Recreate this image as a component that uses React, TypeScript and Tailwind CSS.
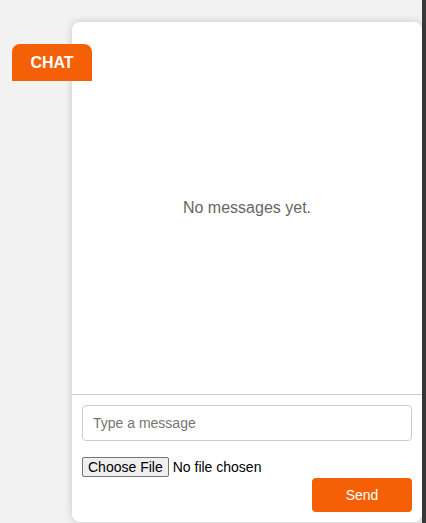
import React from "react";

export default function App() {
  return (
    <div className="flex h-[523px] w-full bg-[#f2f2f2] font-['Liberation_Sans',Arial,sans-serif] overflow-hidden">
      <div className="relative flex-1 pl-[72px] pt-[22px]">
        <div className="flex h-[500px] w-[350px] flex-col rounded-[8px] bg-white shadow-[0_0_8px_rgba(0,0,0,0.18)]">
          <div className="flex flex-1 items-center justify-center">
            <p className="text-[16px] text-[#666]">No messages yet.</p>
          </div>
          <div className="flex flex-col border-t border-[#cccccc] px-[10px] pt-[10px] pb-[10px]">
            <input
              type="text"
              placeholder="Type a message"
              className="h-[36px] w-full rounded-[4px] border border-[#cccccc] px-[10px] text-[14px] text-[#333] placeholder:text-[#757575] outline-none"
            />
            <div className="mt-[16px] flex h-[21px] items-start">
              <input
                type="file"
                className="text-[14px] leading-[16px] text-black file:mr-[4px] file:rounded-[2px] file:border file:border-solid file:border-[#767676] file:bg-[#efefef] file:px-[5px] file:py-[1px] file:text-black"
              />
            </div>
            <div className="flex justify-end">
              <button className="h-[34px] w-[100px] rounded-[4px] bg-[#f55f05] text-[14px] text-white">
                Send
              </button>
            </div>
          </div>
        </div>
        <div className="absolute left-[12px] top-[44px] flex h-[37px] w-[80px] items-center justify-center rounded-t-[8px] bg-[#f55f05] text-[16px] font-bold text-white">
          CHAT
        </div>
      </div>
      <div className="w-[4px] bg-[#3a3a3a]" />
    </div>
  );
}
